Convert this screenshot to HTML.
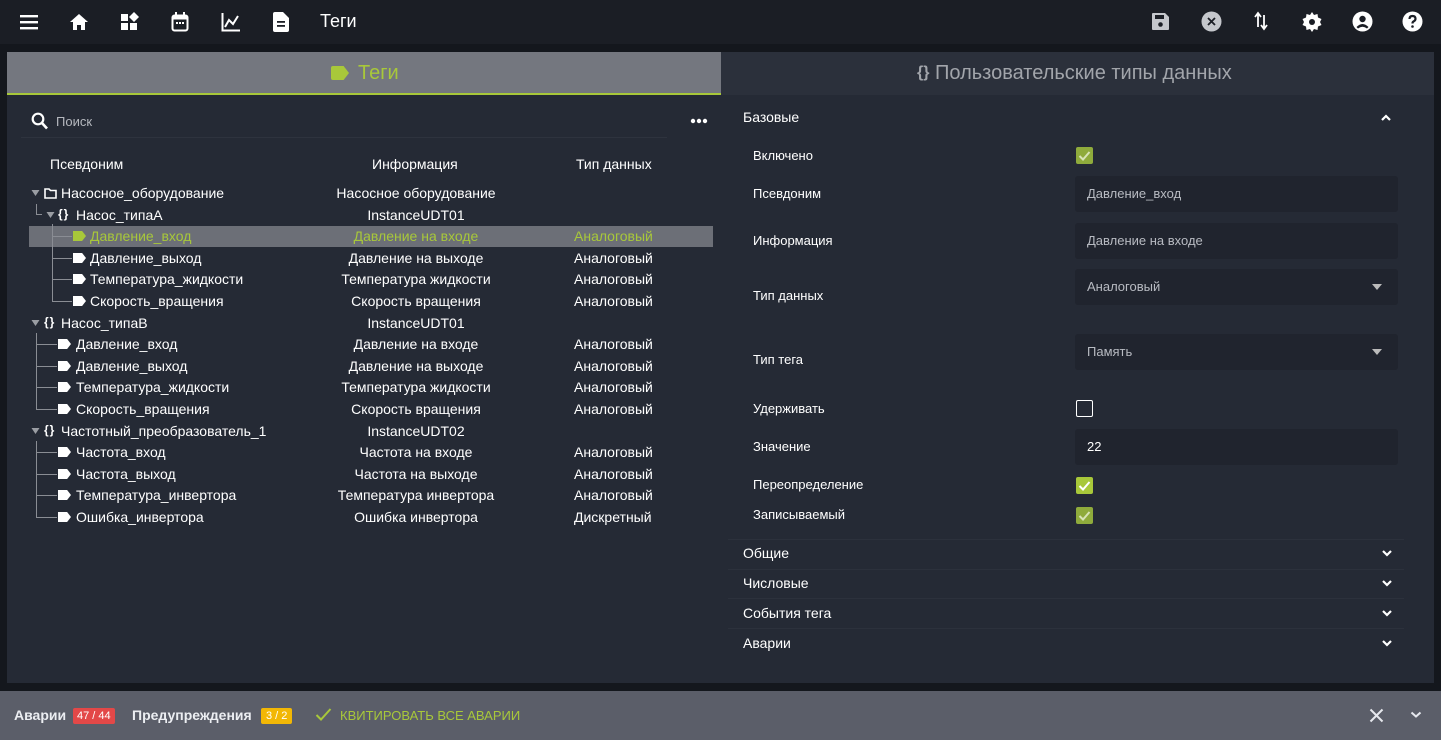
<!DOCTYPE html>
<html><head><meta charset="utf-8"><style>
*{margin:0;padding:0;box-sizing:border-box}
body{width:1441px;height:740px;background:#14171d;font-family:"Liberation Sans",sans-serif;color:#fff;position:relative;overflow:hidden;font-size:14px}
.a{position:absolute;white-space:nowrap}
.top{position:absolute;left:0;top:0;width:1441px;height:44px;background:#1b1e25}
.panel{position:absolute;left:7px;top:52px;width:1427px;height:631px;background:#252a35}
.t{font-size:14px;line-height:16px}
.g{color:#a8c83a}
.lbl{font-size:13px}
.inp{position:absolute;left:1075px;width:323px;height:36px;background:#20242e;border-radius:3px;color:#b8bbc2;font-size:13px;padding-left:12px;line-height:36px}
.cb{position:absolute;left:1076px;width:17px;height:17px;border-radius:2px}
.sec{position:absolute;left:743px;font-size:14px}
.ln{position:absolute;background:#8a8d94}
.tag{position:absolute;width:13px;height:10px;background:#fff;clip-path:polygon(0 0,70% 0,100% 50%,70% 100%,0 100%)}
.br{position:absolute;font-size:12px;font-weight:bold;letter-spacing:1px}
</style></head><body>
<div class="top"></div>
<svg class="a" style="left:19px;top:13px" width="20" height="18" viewBox="0 0 20 18"><rect x="1" y="2" width="18" height="2.4" fill="#fff"/><rect x="1" y="8" width="18" height="2.4" fill="#fff"/><rect x="1" y="14" width="18" height="2.4" fill="#fff"/></svg>
<svg class="a" style="left:69px;top:12px" width="20" height="20" viewBox="0 0 20 20"><path d="M10 2 L1 10 H4 V18 H8 V13 H12 V18 H16 V10 H19 Z" fill="#fff"/></svg>
<svg class="a" style="left:120px;top:12px" width="20" height="20" viewBox="0 0 20 20"><rect x="1" y="2" width="7" height="7" fill="#fff"/><rect x="1" y="11" width="7" height="7" fill="#fff"/><rect x="10" y="11" width="7" height="7" fill="#fff"/><path d="M14 0 L19 5 L14 10 L9 5Z" fill="#fff"/></svg>
<svg class="a" style="left:171px;top:12px" width="18" height="20" viewBox="0 0 18 20"><rect x="1.5" y="3.5" width="15" height="15" rx="2" fill="none" stroke="#fff" stroke-width="2"/><rect x="1.5" y="3.5" width="15" height="4" fill="#fff"/><rect x="4" y="0" width="2" height="4" fill="#fff"/><rect x="12" y="0" width="2" height="4" fill="#fff"/><rect x="5" y="10" width="2" height="2" fill="#fff"/><rect x="8" y="10" width="2" height="2" fill="#fff"/><rect x="11" y="10" width="2" height="2" fill="#fff"/></svg>
<svg class="a" style="left:221px;top:12px" width="20" height="20" viewBox="0 0 20 20"><path d="M1.5 1 V18.5 H19" fill="none" stroke="#fff" stroke-width="2"/><path d="M4 15 L8 8 L12 12 L17 4" fill="none" stroke="#fff" stroke-width="2"/></svg>
<svg class="a" style="left:273px;top:12px" width="16" height="20" viewBox="0 0 16 20"><path d="M2 0 H10 L16 6 V18 Q16 20 14 20 H2 Q0 20 0 18 V2 Q0 0 2 0Z" fill="#fff"/><rect x="4" y="9" width="8" height="1.8" fill="#1b1e25"/><rect x="4" y="13" width="8" height="1.8" fill="#1b1e25"/></svg>
<div class="a" style="left:320px;top:11px;font-size:18px">Теги</div>
<svg class="a" style="left:1151px;top:12px" width="19" height="19" viewBox="0 0 19 19"><path d="M2 1 H14 L18 5 V17 Q18 18 17 18 H2 Q1 18 1 17 V2 Q1 1 2 1Z" fill="#c5c7cc"/><rect x="4" y="3" width="9" height="4" fill="#1b1e25"/><circle cx="9.5" cy="12.5" r="2.3" fill="#1b1e25"/></svg>
<svg class="a" style="left:1201px;top:11px" width="21" height="21" viewBox="0 0 21 21"><circle cx="10.5" cy="10.5" r="10" fill="#c5c7cc"/><path d="M7 7 L14 14 M14 7 L7 14" stroke="#1b1e25" stroke-width="1.8"/></svg>
<svg class="a" style="left:1253px;top:11px" width="16" height="20" viewBox="0 0 16 20"><path d="M5 16 V3 M2 6 L5 2 L8 6" fill="none" stroke="#fff" stroke-width="1.8"/><path d="M11 4 V17 M8 14 L11 18 L14 14" fill="none" stroke="#fff" stroke-width="1.8"/></svg>
<svg class="a" style="left:1302px;top:12px" width="20" height="20" viewBox="0 0 20 20"><path d="M10 0 L12 3 L15.5 2 L16 5.5 L19.5 7 L18 10 L19.5 13 L16 14.5 L15.5 18 L12 17 L10 20 L8 17 L4.5 18 L4 14.5 L0.5 13 L2 10 L0.5 7 L4 5.5 L4.5 2 L8 3Z" fill="#fff"/><circle cx="10" cy="10" r="3" fill="#1b1e25"/></svg>
<svg class="a" style="left:1352px;top:11px" width="21" height="21" viewBox="0 0 21 21"><circle cx="10.5" cy="10.5" r="10" fill="#fff"/><circle cx="10.5" cy="8" r="3.2" fill="#1b1e25"/><path d="M4.5 16 Q10.5 10 16.5 16 L15 17.5 Q10.5 14 6 17.5Z" fill="#1b1e25"/></svg>
<svg class="a" style="left:1402px;top:11px" width="21" height="21" viewBox="0 0 21 21"><circle cx="10.5" cy="10.5" r="10" fill="#fff"/><path d="M7.5 8 Q7.5 5 10.5 5 Q13.5 5 13.5 7.8 Q13.5 9.5 11.5 10.5 Q10.5 11 10.5 12.5" fill="none" stroke="#1b1e25" stroke-width="2.2"/><circle cx="10.5" cy="15.5" r="1.3" fill="#1b1e25"/></svg>

<div class="panel"></div>
<div class="a" style="left:7px;top:52px;width:714px;height:42px;background:#74777f"></div>
<div class="a" style="left:7px;top:93px;width:714px;height:2px;background:#a8c83a"></div>
<div class="a" style="left:721px;top:52px;width:713px;height:43px;background:#2b303b"></div>
<div class="tag a" style="left:331px;top:66px;width:18px;height:14px;background:#a8c83a;border-radius:2px"></div>
<div class="a g" style="left:358px;top:62px;font-size:20px">Теги</div>
<div class="a" style="left:917px;top:62px;font-size:20px;color:#a2a5ab"><span style="font-size:16px;position:relative;top:-2px;font-weight:bold">{}</span> Пользовательские типы данных</div>

<svg class="a" style="left:31px;top:112px" width="17" height="18" viewBox="0 0 17 18"><circle cx="7" cy="7" r="5.3" fill="none" stroke="#fff" stroke-width="2.2"/><path d="M11 11 L16 16.5" stroke="#fff" stroke-width="2.6"/></svg>
<div class="a" style="left:56px;top:114px;font-size:13px;color:#b5b8be">Поиск</div>
<div class="a" style="left:21px;top:137px;width:646px;height:1px;background:#2e333e"></div>
<svg class="a" style="left:690px;top:118px" width="18" height="6"><circle cx="3" cy="3" r="2.2" fill="#fff"/><circle cx="9" cy="3" r="2.2" fill="#fff"/><circle cx="15" cy="3" r="2.2" fill="#fff"/></svg>

<div class="a t" style="left:50px;top:156px">Псевдоним</div>
<div class="a t" style="left:372px;top:156px">Информация</div>
<div class="a t" style="left:576px;top:156px">Тип данных</div>

<div class="a" style="left:29px;top:226px;width:684px;height:21px;background:#6c6f77"></div>

<div class="ln" style="left:36px;top:204px;width:1px;height:10px"></div>
<div class="ln" style="left:36px;top:214px;width:6px;height:1px"></div>
<div class="ln" style="left:52px;top:224px;width:1px;height:77px"></div>
<div class="ln" style="left:52px;top:236px;width:20px;height:1px"></div>
<div class="ln" style="left:52px;top:258px;width:20px;height:1px"></div>
<div class="ln" style="left:52px;top:279px;width:20px;height:1px"></div>
<div class="ln" style="left:52px;top:301px;width:20px;height:1px"></div>
<div class="ln" style="left:36px;top:333px;width:1px;height:76px"></div>
<div class="ln" style="left:36px;top:344px;width:21px;height:1px"></div>
<div class="ln" style="left:36px;top:366px;width:21px;height:1px"></div>
<div class="ln" style="left:36px;top:387px;width:21px;height:1px"></div>
<div class="ln" style="left:36px;top:409px;width:21px;height:1px"></div>
<div class="ln" style="left:36px;top:441px;width:1px;height:76px"></div>
<div class="ln" style="left:36px;top:452px;width:21px;height:1px"></div>
<div class="ln" style="left:36px;top:474px;width:21px;height:1px"></div>
<div class="ln" style="left:36px;top:495px;width:21px;height:1px"></div>
<div class="ln" style="left:36px;top:517px;width:21px;height:1px"></div>

<svg class="a" style="left:31px;top:189px" width="9" height="8"><path d="M0.5 1 H8.5 L4.5 7Z" fill="#9a9da3"/></svg>
<svg class="a" style="left:44px;top:188px" width="13" height="11" viewBox="0 0 13 11"><path d="M1 1 H5 L6.5 2.5 H12 V10 H1Z" fill="none" stroke="#fff" stroke-width="1.6"/></svg>
<svg class="a" style="left:46px;top:211px" width="9" height="8"><path d="M0.5 1 H8.5 L4.5 7Z" fill="#9a9da3"/></svg>
<div class="br" style="left:58px;top:207px">{}</div>
<svg class="a" style="left:31px;top:319px" width="9" height="8"><path d="M0.5 1 H8.5 L4.5 7Z" fill="#9a9da3"/></svg>
<div class="br" style="left:44px;top:315px">{}</div>
<svg class="a" style="left:31px;top:427px" width="9" height="8"><path d="M0.5 1 H8.5 L4.5 7Z" fill="#9a9da3"/></svg>
<div class="br" style="left:44px;top:423px">{}</div>
<div class="tag" style="left:73px;top:231px;background:#a8c83a"></div>
<div class="tag" style="left:73px;top:253px"></div>
<div class="tag" style="left:73px;top:274px"></div>
<div class="tag" style="left:73px;top:296px"></div>
<div class="tag" style="left:58px;top:339px"></div>
<div class="tag" style="left:58px;top:361px"></div>
<div class="tag" style="left:58px;top:382px"></div>
<div class="tag" style="left:58px;top:404px"></div>
<div class="tag" style="left:58px;top:447px"></div>
<div class="tag" style="left:58px;top:469px"></div>
<div class="tag" style="left:58px;top:490px"></div>
<div class="tag" style="left:58px;top:512px"></div>

<div class="a t" style="left:61px;top:185px">Насосное_оборудование</div>
<div class="a t" style="left:76px;top:207px">Насос_типаA</div>
<div class="a t g" style="left:90px;top:228px">Давление_вход</div>
<div class="a t" style="left:90px;top:250px">Давление_выход</div>
<div class="a t" style="left:90px;top:271px">Температура_жидкости</div>
<div class="a t" style="left:90px;top:293px">Скорость_вращения</div>
<div class="a t" style="left:61px;top:315px">Насос_типаB</div>
<div class="a t" style="left:76px;top:336px">Давление_вход</div>
<div class="a t" style="left:76px;top:358px">Давление_выход</div>
<div class="a t" style="left:76px;top:379px">Температура_жидкости</div>
<div class="a t" style="left:76px;top:401px">Скорость_вращения</div>
<div class="a t" style="left:61px;top:423px">Частотный_преобразователь_1</div>
<div class="a t" style="left:76px;top:444px">Частота_вход</div>
<div class="a t" style="left:76px;top:466px">Частота_выход</div>
<div class="a t" style="left:76px;top:487px">Температура_инвертора</div>
<div class="a t" style="left:76px;top:509px">Ошибка_инвертора</div>

<div class="a t" style="left:316px;width:200px;text-align:center;top:185px">Насосное оборудование</div>
<div class="a t" style="left:316px;width:200px;text-align:center;top:207px">InstanceUDT01</div>
<div class="a t g" style="left:316px;width:200px;text-align:center;top:228px">Давление на входе</div>
<div class="a t" style="left:316px;width:200px;text-align:center;top:250px">Давление на выходе</div>
<div class="a t" style="left:316px;width:200px;text-align:center;top:271px">Температура жидкости</div>
<div class="a t" style="left:316px;width:200px;text-align:center;top:293px">Скорость вращения</div>
<div class="a t" style="left:316px;width:200px;text-align:center;top:315px">InstanceUDT01</div>
<div class="a t" style="left:316px;width:200px;text-align:center;top:336px">Давление на входе</div>
<div class="a t" style="left:316px;width:200px;text-align:center;top:358px">Давление на выходе</div>
<div class="a t" style="left:316px;width:200px;text-align:center;top:379px">Температура жидкости</div>
<div class="a t" style="left:316px;width:200px;text-align:center;top:401px">Скорость вращения</div>
<div class="a t" style="left:316px;width:200px;text-align:center;top:423px">InstanceUDT02</div>
<div class="a t" style="left:316px;width:200px;text-align:center;top:444px">Частота на входе</div>
<div class="a t" style="left:316px;width:200px;text-align:center;top:466px">Частота на выходе</div>
<div class="a t" style="left:316px;width:200px;text-align:center;top:487px">Температура инвертора</div>
<div class="a t" style="left:316px;width:200px;text-align:center;top:509px">Ошибка инвертора</div>

<div class="a t g" style="left:574px;top:228px">Аналоговый</div>
<div class="a t" style="left:574px;top:250px">Аналоговый</div>
<div class="a t" style="left:574px;top:271px">Аналоговый</div>
<div class="a t" style="left:574px;top:293px">Аналоговый</div>
<div class="a t" style="left:574px;top:336px">Аналоговый</div>
<div class="a t" style="left:574px;top:358px">Аналоговый</div>
<div class="a t" style="left:574px;top:379px">Аналоговый</div>
<div class="a t" style="left:574px;top:401px">Аналоговый</div>
<div class="a t" style="left:574px;top:444px">Аналоговый</div>
<div class="a t" style="left:574px;top:466px">Аналоговый</div>
<div class="a t" style="left:574px;top:487px">Аналоговый</div>
<div class="a t" style="left:574px;top:509px">Дискретный</div>

<div class="sec" style="top:109px">Базовые</div>
<svg class="a" style="left:1380px;top:113px" width="12" height="9" viewBox="0 0 12 9"><path d="M2 7 L6 3 L10 7" fill="none" stroke="#fff" stroke-width="2.2"/></svg>
<div class="a lbl" style="left:753px;top:148px">Включено</div>
<div class="a lbl" style="left:753px;top:186px">Псевдоним</div>
<div class="a lbl" style="left:753px;top:233px">Информация</div>
<div class="a lbl" style="left:753px;top:288px">Тип данных</div>
<div class="a lbl" style="left:753px;top:352px">Тип тега</div>
<div class="a lbl" style="left:753px;top:401px">Удерживать</div>
<div class="a lbl" style="left:753px;top:439px">Значение</div>
<div class="a lbl" style="left:753px;top:477px">Переопределение</div>
<div class="a lbl" style="left:753px;top:507px">Записываемый</div>

<div class="cb" style="top:147px;background:#8fab3c"><svg width="17" height="17"><path d="M3.5 9 L7 12.5 L13.5 5" fill="none" stroke="#d8e4b8" stroke-width="2"/></svg></div>
<div class="inp" style="top:176px">Давление_вход</div>
<div class="inp" style="top:223px">Давление на входе</div>
<div class="inp" style="top:269px">Аналоговый<svg style="position:absolute;right:16px;top:15px" width="10" height="6"><path d="M0 0 H10 L5 6Z" fill="#bbb"/></svg></div>
<div class="inp" style="top:334px">Память<svg style="position:absolute;right:16px;top:15px" width="10" height="6"><path d="M0 0 H10 L5 6Z" fill="#bbb"/></svg></div>
<div class="cb" style="top:400px;border:1.5px solid #fff"></div>
<div class="inp" style="top:429px;color:#fff">22</div>
<div class="cb" style="top:477px;background:#a8c83a"><svg width="17" height="17"><path d="M3.5 9 L7 12.5 L13.5 5" fill="none" stroke="#fff" stroke-width="2"/></svg></div>
<div class="cb" style="top:507px;background:#8fab3c"><svg width="17" height="17"><path d="M3.5 9 L7 12.5 L13.5 5" fill="none" stroke="#d8e4b8" stroke-width="2"/></svg></div>

<div class="a" style="left:728px;top:539px;width:676px;height:1px;background:#2c313c"></div>
<div class="sec" style="top:545px">Общие</div>
<div class="a" style="left:728px;top:569px;width:676px;height:1px;background:#2c313c"></div>
<div class="sec" style="top:575px">Числовые</div>
<div class="a" style="left:728px;top:598px;width:676px;height:1px;background:#2c313c"></div>
<div class="sec" style="top:605px">События тега</div>
<div class="a" style="left:728px;top:628px;width:676px;height:1px;background:#2c313c"></div>
<div class="sec" style="top:635px">Аварии</div>
<svg class="a" style="left:1381px;top:549px" width="12" height="9" viewBox="0 0 12 9"><path d="M2 2 L6 6 L10 2" fill="none" stroke="#fff" stroke-width="2.2"/></svg>
<svg class="a" style="left:1381px;top:579px" width="12" height="9" viewBox="0 0 12 9"><path d="M2 2 L6 6 L10 2" fill="none" stroke="#fff" stroke-width="2.2"/></svg>
<svg class="a" style="left:1381px;top:609px" width="12" height="9" viewBox="0 0 12 9"><path d="M2 2 L6 6 L10 2" fill="none" stroke="#fff" stroke-width="2.2"/></svg>
<svg class="a" style="left:1381px;top:639px" width="12" height="9" viewBox="0 0 12 9"><path d="M2 2 L6 6 L10 2" fill="none" stroke="#fff" stroke-width="2.2"/></svg>

<div class="a" style="left:0;top:691px;width:1441px;height:49px;background:#5b5e69"></div>
<div class="a" style="left:14px;top:707px;font-size:14px;font-weight:bold;color:#eceef2">Аварии</div>
<div class="a" style="left:73px;top:708px;height:16px;padding:0 4px;background:#e34848;border-radius:2px;font-size:11px;line-height:16px">47 / 44</div>
<div class="a" style="left:132px;top:707px;font-size:14px;font-weight:bold;color:#eceef2">Предупреждения</div>
<div class="a" style="left:261px;top:708px;height:16px;padding:0 5px;background:#f2b705;border-radius:2px;font-size:11px;line-height:16px">3 / 2</div>
<svg class="a" style="left:315px;top:707px" width="17" height="15" viewBox="0 0 17 15"><path d="M1.5 8 L6 12.5 L15.5 2" fill="none" stroke="#a8c83a" stroke-width="2"/></svg>
<div class="a g" style="left:340px;top:708px;font-size:13px">КВИТИРОВАТЬ ВСЕ АВАРИИ</div>
<svg class="a" style="left:1369px;top:708px" width="15" height="15" viewBox="0 0 15 15"><path d="M1.5 1.5 L13.5 13.5 M13.5 1.5 L1.5 13.5" stroke="#e6e8ee" stroke-width="2"/></svg>
<svg class="a" style="left:1410px;top:711px" width="12" height="8" viewBox="0 0 12 8"><path d="M1.5 1.5 L6 5.5 L10.5 1.5" fill="none" stroke="#e6e8ee" stroke-width="2"/></svg>
</body></html>
